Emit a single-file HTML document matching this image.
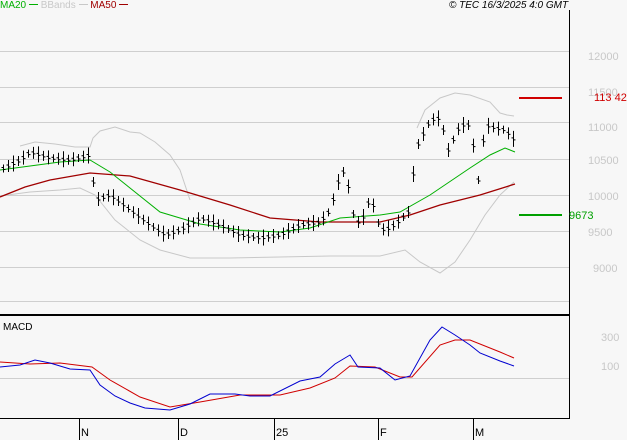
<!DOCTYPE html>
<html><head><meta charset="utf-8"><style>
html,body{margin:0;padding:0;background:#f7f7f7;}
body{width:627px;height:440px;overflow:hidden;position:relative;font-family:"Liberation Sans",sans-serif;}
.t{position:absolute;font-size:10px;white-space:nowrap;}
.ax{color:#c8c8c8;font-size:11px;}
</style></head><body>
<svg id="s" width="627" height="440" style="position:absolute;left:0;top:0">
<g stroke="#cfcfcf" stroke-width="1">
<line x1="0" y1="51.5" x2="569" y2="51.5"/><line x1="0" y1="87.5" x2="569" y2="87.5"/>
<line x1="0" y1="122.5" x2="569" y2="122.5"/><line x1="0" y1="159.5" x2="569" y2="159.5"/>
<line x1="0" y1="195.5" x2="569" y2="195.5"/><line x1="0" y1="231.5" x2="569" y2="231.5"/>
<line x1="0" y1="267.5" x2="569" y2="267.5"/><line x1="0" y1="301.5" x2="569" y2="301.5"/>
<line x1="0" y1="378.5" x2="569" y2="378.5"/>
</g>
<line x1="569.5" y1="10" x2="569.5" y2="419" stroke="#000"/>
<line x1="0" y1="315" x2="569" y2="315" stroke="#000" stroke-width="2"/>
<line x1="0" y1="418.5" x2="569" y2="418.5" stroke="#000"/>
<g stroke="#000"><line x1="79.5" y1="419" x2="79.5" y2="440"/><line x1="178.5" y1="419" x2="178.5" y2="440"/><line x1="274.5" y1="419" x2="274.5" y2="440"/><line x1="378.5" y1="419" x2="378.5" y2="440"/><line x1="473.5" y1="419" x2="473.5" y2="440"/></g>
<polyline fill="none" stroke="#c8c8c8" points="20,146 35,142 55,144 75,147 90,147 93,138 100,131 115,127 130,132 140,133 155,142 170,155 180,170 190,200"/>
<polyline fill="none" stroke="#c8c8c8" points="0,196 30,192 60,190 80,188 95,195 115,220 140,240 160,250 190,258 230,258 280,257 330,256 380,256 405,250 420,262 440,273 455,262 470,240 485,215 500,195 514,182"/>
<polyline fill="none" stroke="#c8c8c8" points="417,128 425,110 440,98 455,93 470,95 490,102 500,113 507,115 514,116"/>
<polyline fill="none" stroke="#a00000" stroke-width="1.3" points="0,197 25,187 50,180 90,173 130,176 180,190 230,205 270,218 320,222 380,222 410,215 440,205 480,195 515,184"/>
<polyline fill="none" stroke="#00b000" points="0,170 30,166 60,162 90,160 110,172 130,188 160,212 200,224 240,230 280,232 310,228 340,218 380,215 400,212 430,195 470,168 490,155 505,148 515,152"/>
<g id="bars" stroke="#000" stroke-width="1"></g>
<line x1="519" y1="98" x2="562" y2="98" stroke="#d00000" stroke-width="2"/>
<line x1="519" y1="215" x2="562" y2="215" stroke="#00a000" stroke-width="2"/>
<polyline fill="none" stroke="#d00000" points="0,362 30,364 60,363 92,367 110,380 140,397 170,407 200,402 240,395 280,395 310,388 335,378 350,366 375,367 400,377 412,377 440,345 455,340 470,340 500,352 514,358"/>
<polyline fill="none" stroke="#0000d0" points="0,367 20,365 35,360 50,363 70,369 90,370 100,385 115,396 130,403 145,408 170,410 190,404 210,394 235,394 250,396 270,396 300,381 320,377 335,364 350,355 358,367 380,368 395,380 410,376 430,340 442,327 455,335 470,345 480,353 500,361 514,366"/>
</svg>
<div class="t" style="left:0;top:0;color:#00b000">MA20 <span style="display:inline-block;width:9px;border-top:1px solid #00b000;vertical-align:3px"></span> <span style="color:#c8c8c8">BBands <span style="display:inline-block;width:9px;border-top:1px solid #c8c8c8;vertical-align:3px"></span></span> <span style="color:#a00000">MA50 <span style="display:inline-block;width:9px;border-top:1px solid #a00000;vertical-align:3px"></span></span></div>
<div class="t" style="left:449px;top:0;font-style:italic;color:#000">© TEC 16/3/2025 4:0 GMT</div>
<div class="t ax" style="left:588px;top:51px">12000</div>
<div class="t ax" style="left:588px;top:87px">11500</div>
<div class="t ax" style="left:588px;top:122px">11000</div>
<div class="t ax" style="left:588px;top:155px">10500</div>
<div class="t ax" style="left:588px;top:191px">10000</div>
<div class="t ax" style="left:588px;top:227px">9500</div>
<div class="t ax" style="left:593px;top:263px">9000</div>
<div class="t" style="left:594px;top:92px;color:#d00000;font-size:11px">113 42</div>
<div class="t" style="left:569px;top:210px;color:#00a000;font-size:11px">9673</div>
<div class="t" style="left:3px;top:322px;color:#000">MACD</div>
<div class="t ax" style="left:601px;top:332px">300</div>
<div class="t ax" style="left:601px;top:361px">100</div>
<div class="t" style="left:81px;top:427px;font-size:11px">N</div>
<div class="t" style="left:180px;top:427px;font-size:11px">D</div>
<div class="t" style="left:276px;top:427px;font-size:11px">25</div>
<div class="t" style="left:380px;top:427px;font-size:11px">F</div>
<div class="t" style="left:475px;top:427px;font-size:11px">M</div>
<script>
var P=[[0,170],[20,160],[30,152],[50,158],[70,160],[90,155],[95,200],[110,195],[130,210],[150,225],[165,235],[180,230],[200,218],[220,225],[240,235],[260,238],[280,235],[300,225],[320,222],[330,210],[340,175],[345,170],[355,225],[365,215],[370,195],[380,230],[390,228],[400,220],[410,210],[415,150],[420,140],[430,120],[440,118],[448,150],[460,125],[470,125],[478,180],[485,125],[495,128],[505,130],[514,140]];
function f(x){for(var i=1;i<P.length;i++){if(x<=P[i][0]){var a=P[i-1],b=P[i];return a[1]+(b[1]-a[1])*(x-a[0])/(b[0]-a[0]);}}return 140;}
var g=document.getElementById('bars'),h='';
for(var x=3,k=0;x<=514;x+=5,k++){var xi=Math.round(x)+0.5,y=f(x),r=4+(k*7%5);
h+='<line x1="'+xi+'" y1="'+(y-r)+'" x2="'+xi+'" y2="'+(y+r)+'"/>';
h+='<line x1="'+(xi-2)+'" y1="'+(y-1)+'" x2="'+xi+'" y2="'+(y-1)+'"/><line x1="'+xi+'" y1="'+(y+1)+'" x2="'+(xi+2)+'" y2="'+(y+1)+'"/>';}
g.innerHTML=h;
</script>
</body></html>
